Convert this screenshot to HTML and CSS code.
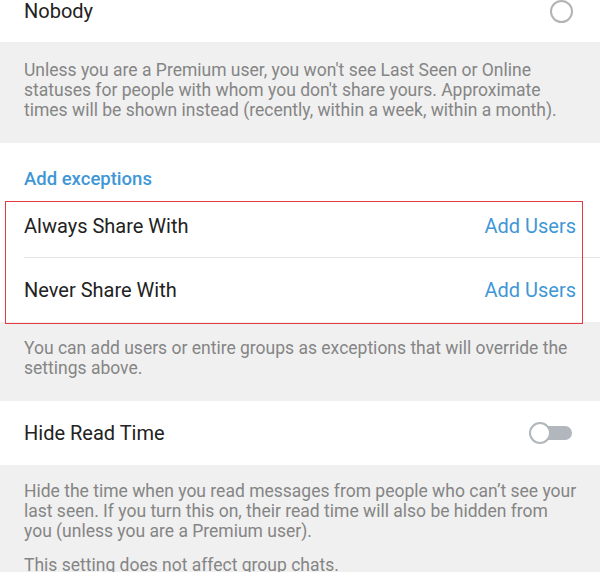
FILE: index.html
```html
<!DOCTYPE html>
<html lang="en">
<head>
<meta charset="utf-8">
<title>Last Seen &amp; Online</title>
<link rel="stylesheet" href="styles.css">
</head>
<body>
  <main class="screen">
    <div class="row row-cut">
      <span class="label">Nobody</span>
      <span class="radio"></span>
    </div>

    <section class="note note-first">
      <p>Unless you are a Premium user, you won't see Last Seen or Online statuses for people with whom you don't share yours. Approximate times will be shown instead (recently, within a week, within a month).</p>
    </section>

    <section class="card exceptions">
      <h2 class="header">Add exceptions</h2>
      <div class="row divided">
        <span class="label">Always Share With</span>
        <span class="value">Add Users</span>
      </div>
      <div class="row">
        <span class="label">Never Share With</span>
        <span class="value">Add Users</span>
      </div>
      <div class="highlight"></div>
    </section>

    <section class="note">
      <p>You can add users or entire groups as exceptions that will override the settings above.</p>
    </section>

    <section class="card">
      <div class="row">
        <span class="label">Hide Read Time</span>
        <span class="switch"><span class="knob"></span></span>
      </div>
    </section>

    <section class="note">
      <p>Hide the time when you read messages from people who can’t see your last seen. If you turn this on, their read time will also be hidden from you (unless you are a Premium user).</p>
      <p>This setting does not affect group chats.</p>
    </section>
  </main>
</body>
</html>
```

FILE: styles.css
```css
html, body {
  margin: 0;
  padding: 0;
  background: #f0f0f0;
}

body {
  font-family: Roboto, "Noto Sans", sans-serif;
  color: #222222;
  width: 600px;
  height: 572px;
  overflow: hidden;
}

.screen {
  display: flex;
  flex-direction: column;
}

.card,
.row-cut {
  background: #ffffff;
}

.card {
  position: relative;
}

.row {
  display: flex;
  align-items: center;
  justify-content: space-between;
  height: 64px;
  padding: 0 24px;
  box-sizing: border-box;
  position: relative;
}

.row-cut {
  height: 42px;
  align-items: flex-start;
  padding-right: 27px;
}

.label {
  font-size: 20px;
  line-height: 22px;
  color: #222222;
}

.value {
  font-size: 20px;
  line-height: 22px;
  color: #3f97d6;
}

.divided::after {
  content: "";
  position: absolute;
  left: 24px;
  right: 0;
  bottom: 0;
  height: 1px;
  background: #e6e6e6;
}

.header {
  margin: 0;
  padding: 25px 24px 4px;
  height: 51px;
  box-sizing: border-box;
  font-size: 18.5px;
  line-height: 22px;
  font-weight: 500;
  color: #3f97d6;
}

/* red annotation frame around the two exception rows */
.highlight {
  position: absolute;
  left: 5px;
  top: 58px;
  width: 578px;
  height: 123px;
  border: 1.5px solid #e23b41;
  box-sizing: border-box;
  pointer-events: none;
}

.radio {
  width: 23px;
  height: 23px;
  border: 2px solid #b3b3b3;
  border-radius: 50%;
  box-sizing: border-box;
}

.note {
  padding: 16px 20px 23px 24px;
  font-size: 17.5px;
  line-height: 20px;
  color: #858585;
}

.note-first {
  padding-top: 18px;
}

.note p {
  margin: 0;
}

.note p + p {
  margin-top: 14px;
}

.switch {
  position: relative;
  width: 36px;
  height: 14px;
  border-radius: 7px;
  background: #b1b7bc;
  margin-right: 4px;
}

.knob {
  position: absolute;
  left: -7px;
  top: -4px;
  width: 22px;
  height: 22px;
  border-radius: 50%;
  background: #ffffff;
  border: 2px solid #b1b7bc;
  box-sizing: border-box;
}
```
